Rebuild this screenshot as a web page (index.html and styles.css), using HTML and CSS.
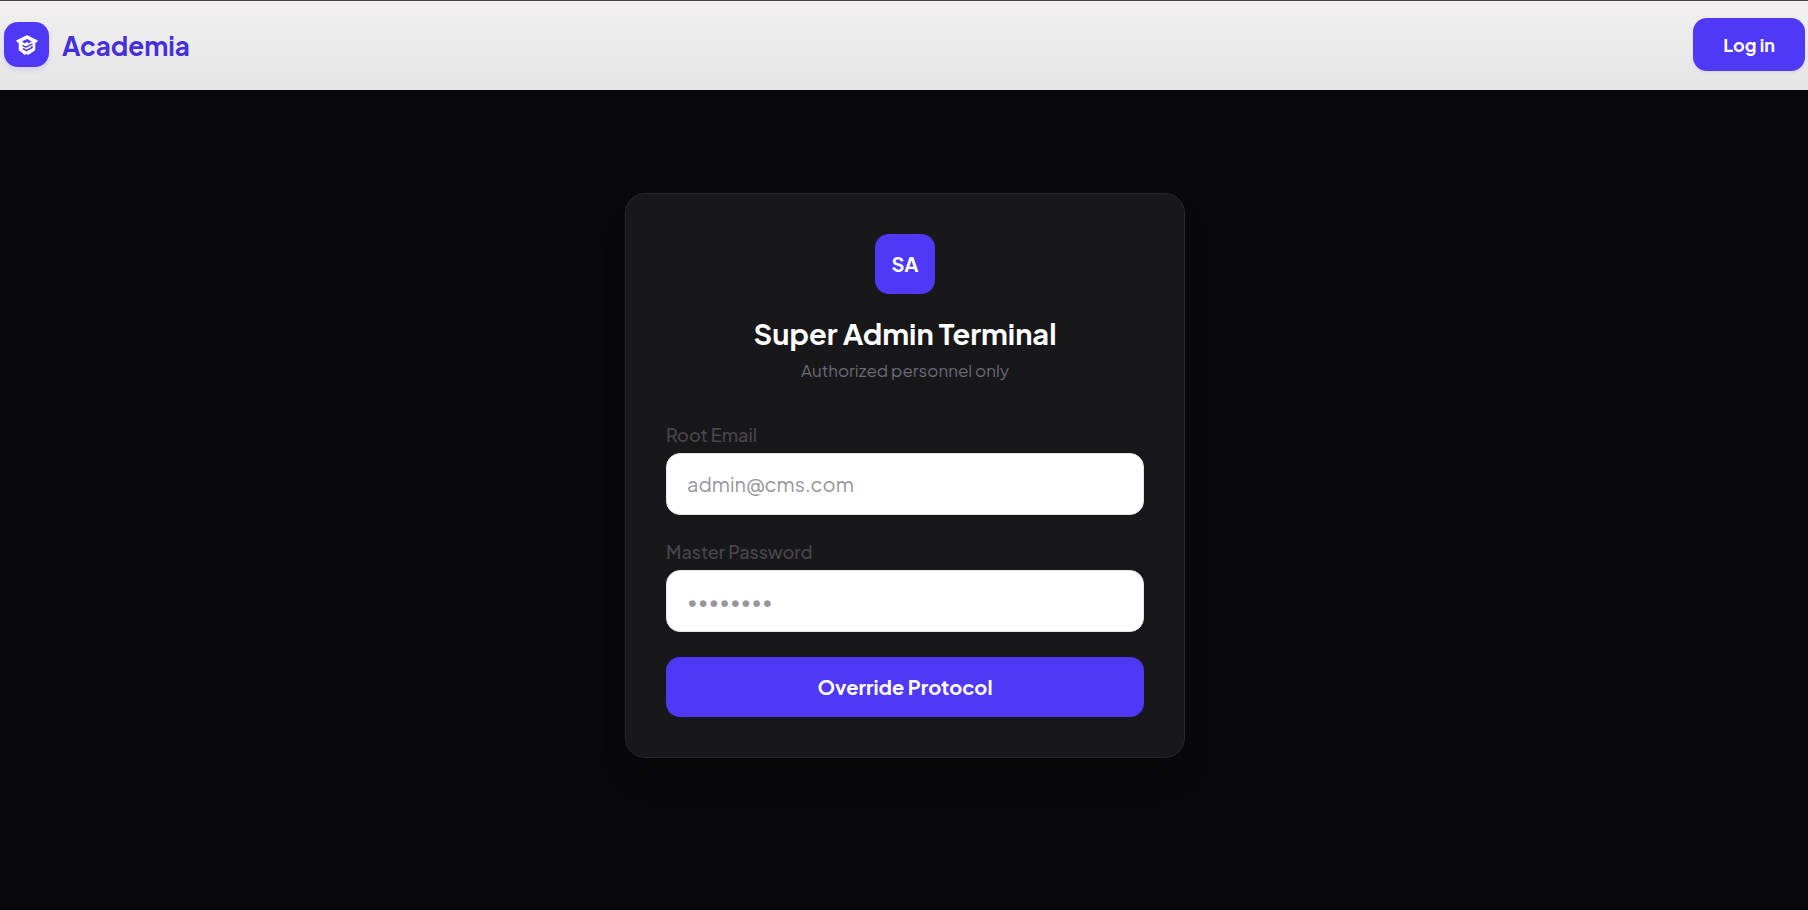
FILE: index.html
```html
<!DOCTYPE html>
<html lang="en">
<head>
<meta charset="utf-8">
<meta name="viewport" content="width=device-width, initial-scale=1">
<title>Academia</title>
<link rel="stylesheet" href="styles.css">
</head>
<body>
<header class="topbar">
  <a class="brand" href="#">
    <span class="brand-mark">
      <svg width="24" height="24" viewBox="0 0 24 24" fill="none" stroke="#fff" stroke-width="2" stroke-linejoin="round" aria-hidden="true">
        <path d="M12 3 2 8l2.500 2V17l3.500 2.500L9.500 21l2-.7 2 .7L19.500 17v-7L22 8Z" fill="#fff" stroke-width="1.500"/>
        <path d="M7 8.600 12 6l4.800 2.400-3.300 2.200-1.500-1.800-2 1.700Z" fill="#4f39f6" stroke="none"/>
        <path d="M7.500 12.500l3.500 1.600 6.500-3.300M8 15.500l3.500 2.200 5.500-3.200v-1.500" stroke="#4f39f6" stroke-width="1.500"/>
      </svg>
    </span>
    <span class="brand-name">Academia</span>
  </a>
  <button class="btn btn-login" type="button">Log in</button>
</header>
<main class="stage">
  <section class="card">
    <div class="card-head">
      <div class="badge">SA</div>
      <h1 class="title">Super Admin Terminal</h1>
      <p class="subtitle">Authorized personnel only</p>
    </div>
    <form class="form">
      <div class="field">
        <label class="label" for="email">Root Email</label>
        <input class="input" id="email" type="email" placeholder="admin@cms.com">
      </div>
      <div class="field">
        <label class="label" for="password">Master Password</label>
        <input class="input" id="password" type="password" placeholder="••••••••">
      </div>
      <button class="btn btn-submit" type="submit">Override Protocol</button>
    </form>
  </section>
</main>
</body>
</html>
```
FILE: styles.css
```css
* { box-sizing: border-box; }
body {
  margin: 0;
  min-height: 100vh;
  display: flex;
  flex-direction: column;
  background: #09090b;
  border-bottom: 1px solid #000;
  font-family: "Plus Jakarta Sans", Inter, "Liberation Sans", sans-serif;
}
.topbar {
  display: flex;
  align-items: center;
  justify-content: space-between;
  height: 90px;
  padding: 0 3px 2px 4px;
  border-top: 1px solid #4a4346;
  background: linear-gradient(#f2f0f1, #e5e5e5);
}
.brand {
  display: flex;
  align-items: center;
  gap: 13px;
  text-decoration: none;
  color: #4530d8;
}
.brand-mark {
  display: grid;
  place-items: center;
  width: 45px;
  height: 45px;
  border-radius: 14px;
  background: #4f39f6;
  box-shadow: 0 3px 5px #4f39f622;
}
.brand-name { padding-top: 2px; font-size: 26px; font-weight: 700; line-height: 36px; }
.btn {
  border: 0;
  border-radius: 14px;
  background: #4f39f6;
  color: #fff;
  font-family: inherit;
  font-weight: 700;
}
.btn-login {
  height: 53px;
  padding: 0 30px;
  font-size: 18px;
  box-shadow: 0 1px 3px #0000001a;
}
.stage {
  flex: 1;
  display: flex;
  flex-direction: column;
  align-items: center;
  padding: 103px 16px 40px 18px;
}
.card {
  width: 100%;
  max-width: 560px;
  padding: 40px;
  border: 1px solid #28282b;
  border-radius: 20px;
  background: #18181b;
  box-shadow: 0 24px 30px -10px #0000004d;
}
.card-head {
  display: flex;
  flex-direction: column;
  align-items: center;
  text-align: center;
}
.badge {
  display: grid;
  place-items: center;
  width: 60px;
  height: 60px;
  padding-bottom: 1px;
  border-radius: 14px;
  background: #4f39f6;
  color: #fff;
  font-size: 20px;
  font-weight: 700;
}
.title {
  margin: 19px 0 0;
  color: #fff;
  font-size: 29px;
  font-weight: 700;
  line-height: 40px;
}
.subtitle {
  margin: 4px 0 0;
  color: #6a6a76;
  font-size: 17px;
  font-weight: 400;
  line-height: 26px;
}
.form { display: flex; flex-direction: column; gap: 24px; margin-top: 39px; }
.field { display: flex; flex-direction: column; gap: 5px; }
.label { color: #49464b; font-size: 18px; font-weight: 500; line-height: 26px; }
.input {
  width: 100%;
  height: 62px;
  padding: 0 20px 2px;
  border: 1px solid #e4e4e7;
  border-radius: 14px;
  background: #fff;
  color: #18181b;
  font-family: inherit;
  font-size: 20px;
}
.input::placeholder { color: #98959b; opacity: 1; }
.btn-submit { height: 60px; margin-top: 1px; padding: 0 30px 2px; font-size: 20px; }
```
